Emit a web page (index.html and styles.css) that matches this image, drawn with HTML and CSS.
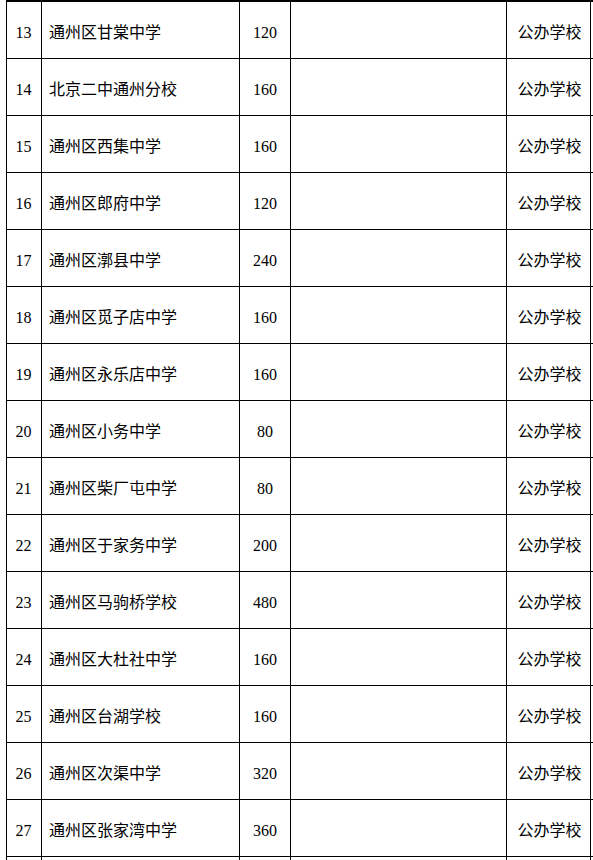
FILE: index.html
```html
<!DOCTYPE html>
<html lang="zh-CN">
<head>
<meta charset="utf-8">
<title>学校名单</title>
<link rel="stylesheet" href="styles.css">
</head>
<body>
<div class="sheet">
  <div class="row first"><div class="c num">13</div><div class="c name">通州区甘棠中学</div><div class="c cnt">120</div><div class="c blank"></div><div class="c type">公办学校</div></div>
  <div class="row"><div class="c num">14</div><div class="c name">北京二中通州分校</div><div class="c cnt">160</div><div class="c blank"></div><div class="c type">公办学校</div></div>
  <div class="row"><div class="c num">15</div><div class="c name">通州区西集中学</div><div class="c cnt">160</div><div class="c blank"></div><div class="c type">公办学校</div></div>
  <div class="row"><div class="c num">16</div><div class="c name">通州区郎府中学</div><div class="c cnt">120</div><div class="c blank"></div><div class="c type">公办学校</div></div>
  <div class="row"><div class="c num">17</div><div class="c name">通州区漷县中学</div><div class="c cnt">240</div><div class="c blank"></div><div class="c type">公办学校</div></div>
  <div class="row"><div class="c num">18</div><div class="c name">通州区觅子店中学</div><div class="c cnt">160</div><div class="c blank"></div><div class="c type">公办学校</div></div>
  <div class="row"><div class="c num">19</div><div class="c name">通州区永乐店中学</div><div class="c cnt">160</div><div class="c blank"></div><div class="c type">公办学校</div></div>
  <div class="row"><div class="c num">20</div><div class="c name">通州区小务中学</div><div class="c cnt">80</div><div class="c blank"></div><div class="c type">公办学校</div></div>
  <div class="row"><div class="c num">21</div><div class="c name">通州区柴厂屯中学</div><div class="c cnt">80</div><div class="c blank"></div><div class="c type">公办学校</div></div>
  <div class="row"><div class="c num">22</div><div class="c name">通州区于家务中学</div><div class="c cnt">200</div><div class="c blank"></div><div class="c type">公办学校</div></div>
  <div class="row"><div class="c num">23</div><div class="c name">通州区马驹桥学校</div><div class="c cnt">480</div><div class="c blank"></div><div class="c type">公办学校</div></div>
  <div class="row"><div class="c num">24</div><div class="c name">通州区大杜社中学</div><div class="c cnt">160</div><div class="c blank"></div><div class="c type">公办学校</div></div>
  <div class="row"><div class="c num">25</div><div class="c name">通州区台湖学校</div><div class="c cnt">160</div><div class="c blank"></div><div class="c type">公办学校</div></div>
  <div class="row"><div class="c num">26</div><div class="c name">通州区次渠中学</div><div class="c cnt">320</div><div class="c blank"></div><div class="c type">公办学校</div></div>
  <div class="row"><div class="c num">27</div><div class="c name">通州区张家湾中学</div><div class="c cnt">360</div><div class="c blank"></div><div class="c type">公办学校</div></div>
  <div class="row tail"><div class="c num"></div><div class="c name"></div><div class="c cnt"></div><div class="c blank"></div><div class="c type"></div></div>
</div>
</body>
</html>
```

FILE: styles.css
```css
html, body {
  margin: 0;
  padding: 0;
  background: #ffffff;
}
body {
  overflow: hidden;
  height: 860px;
}
.sheet {
  padding-left: 6px;
  font-family: "Liberation Serif", "Noto Sans CJK SC", serif;
  font-size: 16px;
  color: #000000;
}
.row {
  display: grid;
  grid-template-columns: 35px 198px 51px 216px 85px;
  height: 57px;
  box-sizing: border-box;
  border-bottom: 1px solid #000000;
}
.row.first {
  height: 59px;
  border-top: 2px solid #000000;
}
.row.tail {
  height: 3px;
  border-bottom: none;
}
.c {
  box-sizing: border-box;
  border-left: 1px solid #000000;
  display: flex;
  align-items: center;
  justify-content: center;
  padding-top: 6px;
  line-height: 20px;
  white-space: nowrap;
}
.row.tail .c {
  padding-top: 0;
}
.c.type {
  border-right: 1px solid #000000;
  padding-left: 2px;
}
.c.name {
  justify-content: flex-start;
  padding-left: 7px;
}
.c.num {
  padding-right: 1px;
}
```
